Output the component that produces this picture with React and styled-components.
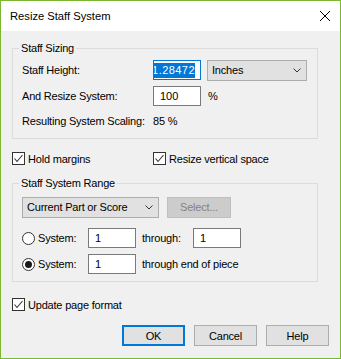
import React from "react";
import styled, { createGlobalStyle } from "styled-components";

const GlobalStyle = createGlobalStyle`
  body {
    margin: 0;
    font-family: "Liberation Sans", Arial, sans-serif;
    font-size: 11px;
    color: #000;
  }
`;

const Window = styled.div`
  width: 341px;
  height: 359px;
  box-sizing: border-box;
  border: 1px solid #7cb82f;
  display: flex;
  flex-direction: column;
  background: #f0f0f0;
`;

const TitleBar = styled.div`
  height: 30px;
  background: #fff;
  display: flex;
  align-items: center;
  justify-content: space-between;
  padding: 0 9px 0 9px;
  font-size: 11.2px;
`;

const CloseIcon = styled.svg`
  width: 10px;
  height: 10px;
  margin-right: 1px;
`;

const Body = styled.div`
  flex: 1;
  display: flex;
  flex-direction: column;
  align-items: flex-start;
  padding: 10px 11px 0 11px;
  letter-spacing: -0.2px;
`;

const Group = styled.fieldset`
  width: 306px;
  box-sizing: border-box;
  margin: ${(p) => p.$top || 0}px 0 0 0;
  border: 1px solid #dcdcdc;
  padding: 0 9px ${(p) => p.$bottom}px 9px;
  min-width: 0;
`;

const Legend = styled.legend`
  line-height: 15px;
  padding: 0 2px;
  margin-left: -3px;
`;

const Row = styled.div`
  display: flex;
  align-items: flex-start;
  margin-top: ${(p) => p.$top || 0}px;
  line-height: ${(p) => p.$lh || 20}px;
`;

const Label = styled.span`
  width: ${(p) => p.$w}px;
  margin-left: ${(p) => p.$ml || 0}px;
  flex: none;
  white-space: nowrap;
`;

const TextBox = styled.input`
  box-sizing: border-box;
  width: 48px;
  height: 20px;
  margin: 0;
  padding: 0 0 0 6px;
  border: 1px solid #7a7a7a;
  background: #fff;
  font: inherit;
  color: #000;
  outline: none;
`;

const FocusBox = styled.div`
  box-sizing: border-box;
  width: 48px;
  height: 20px;
  border: 1px solid #0078d7;
  background: #fff;
  display: flex;
  align-items: center;
  justify-content: flex-end;
  padding-right: 5px;
`;

const Selection = styled.span`
  width: 41px;
  height: 15px;
  line-height: 15px;
  overflow: hidden;
  display: flex;
  justify-content: flex-end;
  background: #0078d7;
  color: #fff;
  letter-spacing: 0.45px;
  white-space: nowrap;
`;

const DropDown = styled.div`
  box-sizing: border-box;
  width: ${(p) => p.$w}px;
  height: 21px;
  margin-left: ${(p) => p.$ml || 0}px;
  border: 1px solid #adadad;
  background: #e1e1e1;
  display: flex;
  align-items: center;
  justify-content: space-between;
  padding: 0 5px 0 4px;
  line-height: 19px;
`;

const Chevron = styled.svg`
  width: 8px;
  height: 5px;
`;

const Button = styled.div`
  box-sizing: border-box;
  width: ${(p) => p.$w || 63}px;
  height: 21px;
  margin-left: ${(p) => p.$ml || 0}px;
  border: ${(p) => (p.$default ? "2px solid #0078d7" : "1px solid #adadad")};
  background: ${(p) => (p.$disabled ? "#cccccc" : "#e1e1e1")};
  border-color: ${(p) => (p.$disabled ? "#bfbfbf" : undefined)};
  color: ${(p) => (p.$disabled ? "#838383" : "#000")};
  display: flex;
  align-items: center;
  justify-content: center;
`;

const CheckRow = styled.div`
  display: flex;
  align-items: center;
  height: 15px;
  margin-top: ${(p) => p.$top}px;
`;

const CheckItem = styled.label`
  display: flex;
  align-items: center;
  gap: 3px;
  width: ${(p) => p.$w || "auto"};
  white-space: nowrap;
`;

const Box = styled.span`
  box-sizing: border-box;
  width: 13px;
  height: 13px;
  border: 1px solid #333;
  background: #fff;
  display: flex;
  align-items: center;
  justify-content: center;
`;

const Radio = styled.span`
  box-sizing: border-box;
  width: 13px;
  height: 13px;
  border-radius: 50%;
  border: 1px solid #333;
  background: #fff;
  display: flex;
  align-items: center;
  justify-content: center;
  flex: none;
  &::after {
    content: "";
    width: 7px;
    height: 7px;
    border-radius: 50%;
    background: ${(p) => (p.$on ? "#1a1a1a" : "transparent")};
  }
`;

const RadioLabel = styled.div`
  width: 66px;
  display: flex;
  align-items: center;
  gap: 3px;
  height: 20px;
  flex: none;
`;

const Buttons = styled.div`
  align-self: stretch;
  display: flex;
  justify-content: flex-end;
  gap: 9px;
  margin-top: 13px;
`;

const Check = () => (
  <Box>
    <svg width="11" height="11" viewBox="0 0 11 11">
      <path d="M1.5 5.5 L4 8.5 L9.5 2" fill="none" stroke="#333" strokeWidth="1.1" />
    </svg>
  </Box>
);

const Arrow = () => (
  <Chevron viewBox="0 0 8 5">
    <path d="M0.5 0.5 L4 4 L7.5 0.5" fill="none" stroke="#333" strokeWidth="1" />
  </Chevron>
);

export default function App() {
  return (
    <>
      <GlobalStyle />
      <Window>
        <TitleBar>
          <span>Resize Staff System</span>
          <CloseIcon viewBox="0 0 10 10">
            <path d="M0 0 L10 10 M10 0 L0 10" stroke="#000" strokeWidth="1" />
          </CloseIcon>
        </TitleBar>
        <Body>
          <Group $bottom={9}>
            <Legend>Staff Sizing</Legend>
            <Row $top={4}>
              <Label $w={131}>Staff Height:</Label>
              <FocusBox>
                <Selection>1.28472</Selection>
              </FocusBox>
              <DropDown $w={100} $ml={6}>
                <span>Inches</span>
                <Arrow />
              </DropDown>
            </Row>
            <Row $top={5}>
              <Label $w={131}>And Resize System:</Label>
              <TextBox readOnly value="100" />
              <Label $ml={7}>%</Label>
            </Row>
            <Row $top={8} $lh={15}>
              <Label $w={131}>Resulting System Scaling:</Label>
              <span>85 %</span>
            </Row>
          </Group>

          <CheckRow $top={12}>
            <CheckItem $w="141px">
              <Check />
              Hold margins
            </CheckItem>
            <CheckItem>
              <Check />
              Resize vertical space
            </CheckItem>
          </CheckRow>

          <Group $top={10} $bottom={7}>
            <Legend>Staff System Range</Legend>
            <Row $top={6} $lh={19}>
              <DropDown $w={137}>
                <span>Current Part or Score</span>
                <Arrow />
              </DropDown>
              <Button $w={64} $ml={8} $disabled>
                Select...
              </Button>
            </Row>
            <Row $top={10}>
              <RadioLabel>
                <Radio />
                System:
              </RadioLabel>
              <TextBox readOnly value="1" />
              <Label $w={51} $ml={6}>
                through:
              </Label>
              <TextBox readOnly value="1" />
            </Row>
            <Row $top={6}>
              <RadioLabel>
                <Radio $on />
                System:
              </RadioLabel>
              <TextBox readOnly value="1" />
              <Label $ml={6}>through end of piece</Label>
            </Row>
          </Group>

          <CheckRow $top={15}>
            <CheckItem>
              <Check />
              Update page format
            </CheckItem>
          </CheckRow>

          <Buttons>
            <Button $default>OK</Button>
            <Button>Cancel</Button>
            <Button>Help</Button>
          </Buttons>
        </Body>
      </Window>
    </>
  );
}
